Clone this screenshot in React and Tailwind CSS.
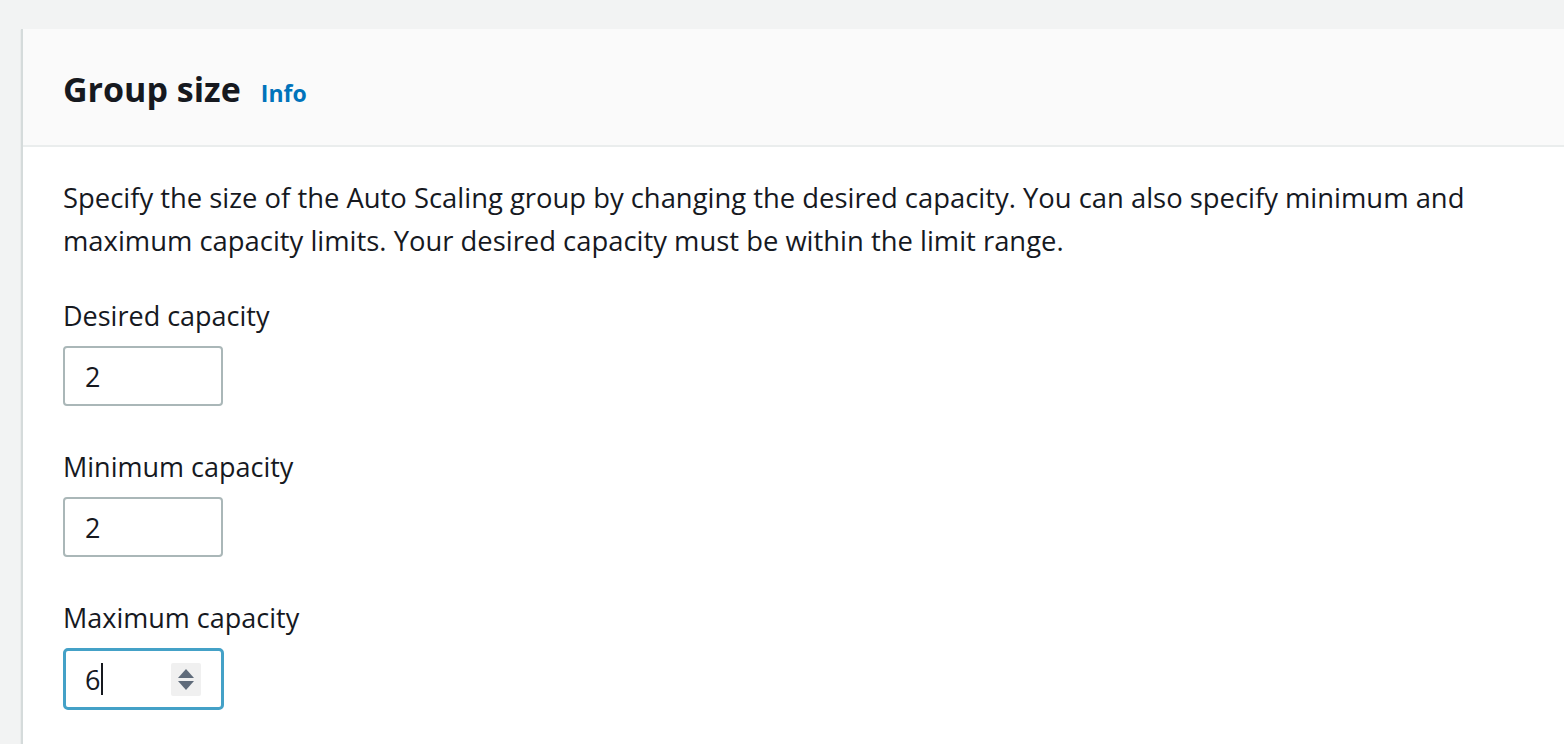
import React from "react";

function Field({ label, value, focused, className = "" }) {
  return (
    <div className={className}>
      <div className="text-[27px] leading-[36px] text-[#16191f]">{label}</div>
      <div
        className={
          focused
            ? "mt-[12px] flex h-[62px] w-[161px] items-center rounded-[5px] border-[3px] border-[#44a1c7] bg-white pl-[19px] pr-[20px]"
            : "mt-[12px] flex h-[60px] w-[160px] items-center rounded-[4px] border-2 border-[#aab7b8] bg-white pl-[20px]"
        }
      >
        <span className="text-[27px] leading-none text-[#16191f]">{value}</span>
        {focused && <span className="ml-[1px] h-[32px] w-[2px] bg-[#16191f]" />}
        {focused && (
          <span className="ml-auto flex h-[33px] w-[30px] flex-col items-center justify-center gap-[3px] rounded-[2px] bg-[#f0f0f0]">
            <svg width="16" height="9" viewBox="0 0 16 9"><path d="M8 0 L16 9 L0 9 Z" fill="#5f6b7a" /></svg>
            <svg width="16" height="9" viewBox="0 0 16 9"><path d="M0 0 L16 0 L8 9 Z" fill="#5f6b7a" /></svg>
          </span>
        )}
      </div>
    </div>
  );
}

export default function App() {
  return (
    <div className="h-[744px] overflow-hidden bg-[#f2f3f3] pl-[21px] pt-[29px] font-['Open_Sans',sans-serif]">
      <div className="h-full border-l-2 border-[#d5dbdb] bg-white shadow-[0_1px_1px_rgba(0,28,36,0.2)]">
        <div className="flex h-[118px] items-baseline gap-[20px] border-b-2 border-[#eaeded] bg-[#fafafa] pl-[40px] pt-[38px]">
          <h2 className="text-[34px] font-bold leading-[44px] text-[#16191f]">Group size</h2>
          <a className="text-[23px] font-bold leading-none text-[#0073bb]">Info</a>
        </div>
        <div className="pl-[40px] pr-[40px] pt-[29px]">
          <p className="max-w-[1440px] text-[27.4px] leading-[43px] text-[#16191f]">
            Specify the size of the Auto Scaling group by changing the desired capacity. You can also specify minimum and
            maximum capacity limits. Your desired capacity must be within the limit range.
          </p>
          <Field className="mt-[36px]" label="Desired capacity" value="2" />
          <Field className="mt-[43px]" label="Minimum capacity" value="2" />
          <Field className="mt-[43px]" label="Maximum capacity" value="6" focused />
        </div>
      </div>
    </div>
  );
}
